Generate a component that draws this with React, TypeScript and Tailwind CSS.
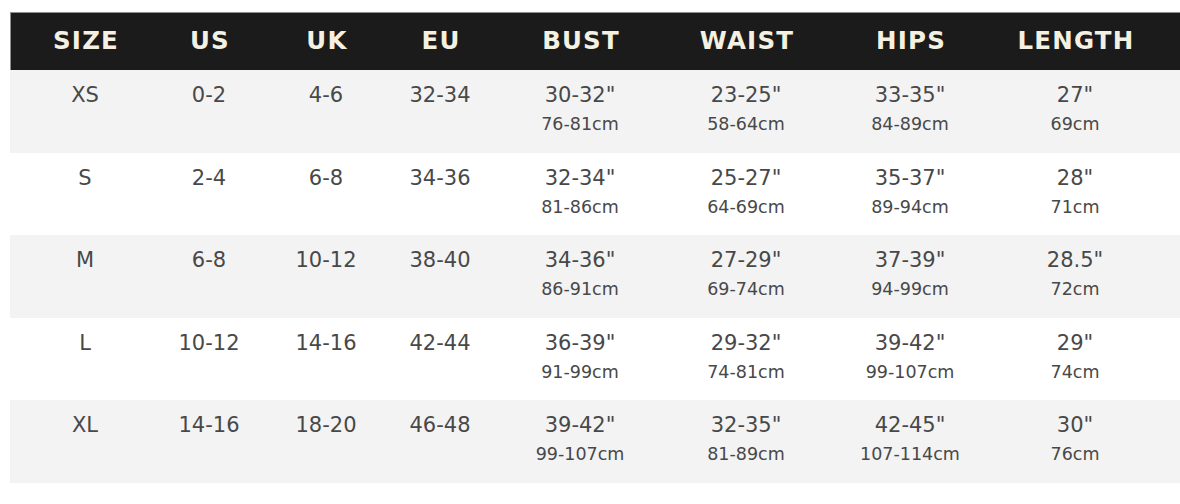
const columns = ['SIZE', 'US', 'UK', 'EU', 'BUST', 'WAIST', 'HIPS', 'LENGTH'];

type Measure = { inches: string; cm: string };

interface SizeRow {
  size: string;
  us: string;
  uk: string;
  eu: string;
  bust: Measure;
  waist: Measure;
  hips: Measure;
  length: Measure;
}

const rows: SizeRow[] = [
  {
    size: 'XS', us: '0-2', uk: '4-6', eu: '32-34',
    bust: { inches: '30-32"', cm: '76-81cm' },
    waist: { inches: '23-25"', cm: '58-64cm' },
    hips: { inches: '33-35"', cm: '84-89cm' },
    length: { inches: '27"', cm: '69cm' },
  },
  {
    size: 'S', us: '2-4', uk: '6-8', eu: '34-36',
    bust: { inches: '32-34"', cm: '81-86cm' },
    waist: { inches: '25-27"', cm: '64-69cm' },
    hips: { inches: '35-37"', cm: '89-94cm' },
    length: { inches: '28"', cm: '71cm' },
  },
  {
    size: 'M', us: '6-8', uk: '10-12', eu: '38-40',
    bust: { inches: '34-36"', cm: '86-91cm' },
    waist: { inches: '27-29"', cm: '69-74cm' },
    hips: { inches: '37-39"', cm: '94-99cm' },
    length: { inches: '28.5"', cm: '72cm' },
  },
  {
    size: 'L', us: '10-12', uk: '14-16', eu: '42-44',
    bust: { inches: '36-39"', cm: '91-99cm' },
    waist: { inches: '29-32"', cm: '74-81cm' },
    hips: { inches: '39-42"', cm: '99-107cm' },
    length: { inches: '29"', cm: '74cm' },
  },
  {
    size: 'XL', us: '14-16', uk: '18-20', eu: '46-48',
    bust: { inches: '39-42"', cm: '99-107cm' },
    waist: { inches: '32-35"', cm: '81-89cm' },
    hips: { inches: '42-45"', cm: '107-114cm' },
    length: { inches: '30"', cm: '76cm' },
  },
];

const grid = 'grid grid-cols-[148px_100px_134px_94px_186px_146px_182px_148px]';

function Plain({ value }: { value: string }) {
  return <div className="text-center text-[21px] leading-[25px]">{value}</div>;
}

function Dual({ m }: { m: Measure }) {
  return (
    <div className="flex flex-col items-center">
      <span className="text-[21px] leading-[25px]">{m.inches}</span>
      <span className="mt-[5px] text-[17.5px] leading-[22px]">{m.cm}</span>
    </div>
  );
}

export default function App() {
  return (
    <div className="w-[1180px] h-[504px] bg-white pt-[12px] pl-[10px] font-['DejaVu_Sans',sans-serif]">
      {/* Header */}
      <div className={`${grid} h-[58px] items-center bg-[#1b1b1b] border-t border-l border-[#8f8f8f] pl-px`}>
        {columns.map((c) => (
          <div key={c} className="text-center text-[24.5px] font-bold tracking-[1.2px] text-[#f4f0e2]">
            {c}
          </div>
        ))}
      </div>

      {/* Rows */}
      {rows.map((r, i) => (
        <div
          key={r.size}
          className={`${grid} h-[82.6px] pt-[13px] pl-px text-[#484848] ${i % 2 === 0 ? 'bg-[#f3f3f3]' : 'bg-white'}`}
        >
          <Plain value={r.size} />
          <Plain value={r.us} />
          <Plain value={r.uk} />
          <Plain value={r.eu} />
          <Dual m={r.bust} />
          <Dual m={r.waist} />
          <Dual m={r.hips} />
          <Dual m={r.length} />
        </div>
      ))}
    </div>
  );
}
